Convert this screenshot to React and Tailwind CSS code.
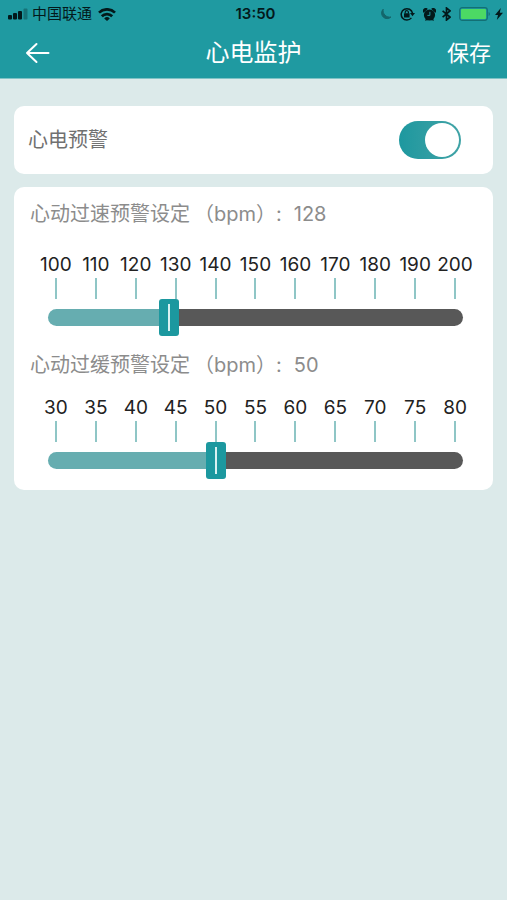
import React, { useState } from 'react';

const StatusBar = () => (
  <div className="grid grid-cols-3 items-center h-7 pl-2 pr-1 text-[#03191b]">
    <div className="flex items-center">
      <svg width="20" height="12" viewBox="0 0 20 12" fill="currentColor" className="mr-1">
        <rect x="0" y="7" width="4" height="4.5" rx="1" />
        <rect x="5" y="5" width="4" height="6.5" rx="1" />
        <rect x="10" y="3" width="4" height="8.5" rx="1" />
        <rect x="15.5" y="0.5" width="4" height="11" rx="1" opacity="0.3" />
      </svg>
      <span className="text-[15px] leading-5 whitespace-nowrap">中国联通</span>
      <svg width="18" height="13" viewBox="0 0 18 13" fill="none" stroke="currentColor" strokeWidth="2.7" className="ml-1.5">
        <path d="M1 4.6a11.4 11.4 0 0 1 16 0" />
        <path d="M3.8 8.2a7.4 7.4 0 0 1 10.4 0" />
        <path d="M9 13 6.2 10.4a4 4 0 0 1 5.6 0z" fill="currentColor" stroke="none" />
      </svg>
    </div>

    <span className="text-center text-[15px] leading-5 font-semibold">13:50</span>

    <div className="flex items-center justify-end">
      <svg width="12" height="12" viewBox="0 0 12 12" fill="currentColor" opacity="0.4" className="mr-2">
        <path d="M3.2 1.2A5.2 5.2 0 1 0 11 9 6.6 6.6 0 0 1 3.2 1.2z" stroke="currentColor" strokeWidth="1" />
      </svg>
      <svg width="15" height="14" viewBox="0 0 15 14" fill="none" stroke="currentColor" strokeWidth="1.5" className="mr-2">
        <path d="M11.4 10.9A5.7 5.7 0 1 1 12.5 6.2" />
        <path d="M10 6h5l-2.5 3.2z" fill="currentColor" stroke="none" />
        <rect x="4" y="6.2" width="5.6" height="4.2" rx="0.5" fill="currentColor" stroke="none" />
        <path d="M5.2 6.5V5.2a1.6 1.6 0 0 1 3.2 0v1.3" strokeWidth="1.2" />
      </svg>
      <svg width="13" height="13" viewBox="0 0 13 13" fill="currentColor" className="mr-1.5">
        <circle cx="6.5" cy="7" r="5.6" />
        <path d="M.6 4.8A2.6 2.6 0 0 1 4.8 1zM12.4 4.8A2.6 2.6 0 0 0 8.2 1zM2 12.8l1-2.4 2 1.6zM11 12.8l-1-2.4L8 12z" />
        <path d="M6.9 3.8v3.6H4.4" fill="none" stroke="#1f9aa1" strokeWidth="1" />
      </svg>
      <svg width="9" height="14" viewBox="0 0 9 14" fill="none" stroke="currentColor" strokeWidth="1.7" className="mr-2">
        <path d="M.6 3.8 8 10.1 4.5 13V1L8 3.9.6 10.2" />
      </svg>
      <svg width="32" height="14" viewBox="0 0 32 14" fill="none" className="mr-1">
        <rect x="0.7" y="0.7" width="27.6" height="12.6" rx="2.5" stroke="#136f74" strokeWidth="1.2" />
        <rect x="2" y="2" width="25" height="10" rx="1" fill="#4cd964" />
        <path d="M29.6 5v4a2.2 2.2 0 0 0 0-4z" fill="#136f74" />
      </svg>
      <svg width="8" height="12" viewBox="0 0 8 12" fill="currentColor">
        <path d="M5.8 0 0 7h3L1.8 12 8 4.8H4.8z" />
      </svg>
    </div>
  </div>
);

const Header = () => (
  <header className="bg-[#1f9aa1] border-b border-[#7fc3c6]">
    <StatusBar />
    <div className="grid grid-cols-3 items-center h-[50px] px-4 text-white">
      <button type="button" aria-label="返回" className="justify-self-start pl-2 cursor-pointer">
        <svg width="26" height="22" viewBox="0 0 26 22" fill="none" stroke="currentColor" strokeWidth="2" strokeLinecap="round" strokeLinejoin="round">
          <path d="M24.5 11H3M12.5 2 3 11l9.5 9" />
        </svg>
      </button>
      <h1 className="text-center text-2xl leading-8 whitespace-nowrap">心电监护</h1>
      <button type="button" className="justify-self-end text-[22px] leading-8 cursor-pointer">
        保存
      </button>
    </div>
  </header>
);

const ScaleSlider = ({ id, label, min, max, step, value, onChange, gap }) => {
  const marks = Array.from({ length: 11 }, (_, i) => min + i * step);
  const percent = ((value - min) / (max - min)) * 100;

  return (
    <div className={`flex flex-col ${gap}`}>
      <label htmlFor={id} className="flex px-4 text-[20px] leading-[30px] text-[#8c8c8c]">
        <span>{label}</span>
        <span className="ml-1">（bpm）</span>
        <span className="mr-3">:</span>
        <span>{value}</span>
      </label>
      <div>
        <div className="grid grid-cols-11 pl-[22px] pr-[18px]">
          {marks.map((mark) => (
            <div key={mark} className="flex flex-col items-center gap-px">
              <span className="text-[19px] leading-6 text-[#222]">{mark}</span>
              <span className="w-[2px] h-[21px] bg-[#8fc6c6]" />
            </div>
          ))}
        </div>
        <div className="pl-[34px] pr-[30px]">
          <input
            id={id}
            type="range"
            min={min}
            max={max}
            value={value}
            onChange={(e) => onChange(Number(e.target.value))}
            style={{ '--fill': `${percent}%` }}
            className="block w-full h-[37px] appearance-none bg-transparent cursor-pointer [&::-webkit-slider-runnable-track]:h-[17px] [&::-webkit-slider-runnable-track]:rounded-full [&::-webkit-slider-runnable-track]:bg-[linear-gradient(to_right,#66adb0_var(--fill),#585858_var(--fill))] [&::-webkit-slider-thumb]:appearance-none [&::-webkit-slider-thumb]:-mt-[10px] [&::-webkit-slider-thumb]:w-5 [&::-webkit-slider-thumb]:h-[37px] [&::-webkit-slider-thumb]:rounded-[3px] [&::-webkit-slider-thumb]:bg-[#1c989f] [&::-webkit-slider-thumb]:bg-[linear-gradient(#d9f1f1,#d9f1f1)] [&::-webkit-slider-thumb]:bg-[length:2px_27px] [&::-webkit-slider-thumb]:bg-center [&::-webkit-slider-thumb]:bg-no-repeat"
          />
        </div>
      </div>
    </div>
  );
};

const App = () => {
  const [enabled, setEnabled] = useState(true);
  const [fast, setFast] = useState(128);
  const [slow, setSlow] = useState(50);

  return (
    <div className="min-h-screen bg-[#dceaea] font-['Inter','Noto_Sans_CJK_SC',sans-serif]">
      <Header />

      <main className="flex flex-col gap-[13px] px-[14px] pt-[27px]">
        {/* Warning switch */}
        <section className="flex items-center justify-between h-[68px] pl-[14px] pr-8 bg-white rounded-[10px]">
          <label htmlFor="warning" className="text-[20px] leading-[30px] text-[#707070]">
            心电预警
          </label>
          <input
            id="warning"
            type="checkbox"
            role="switch"
            checked={enabled}
            onChange={() => setEnabled(!enabled)}
            className="flex items-center w-[62px] h-[38px] p-[2px] appearance-none rounded-full bg-gray-300 cursor-pointer before:block before:size-[34px] before:rounded-full before:bg-white before:content-[''] checked:justify-end checked:bg-linear-to-r checked:from-[#1c989f] checked:to-[#3fa3a6]"
          />
        </section>

        {/* Heart rate limits */}
        <section className="flex flex-col gap-[14px] pt-3 pb-[11px] bg-white rounded-[10px]">
          <ScaleSlider
            id="fast"
            label="心动过速预警设定"
            min={100}
            max={200}
            step={10}
            value={fast}
            onChange={setFast}
            gap="gap-6"
          />
          <ScaleSlider
            id="slow"
            label="心动过缓预警设定"
            min={30}
            max={80}
            step={5}
            value={slow}
            onChange={setSlow}
            gap="gap-4"
          />
        </section>
      </main>
    </div>
  );
};

export default App;
